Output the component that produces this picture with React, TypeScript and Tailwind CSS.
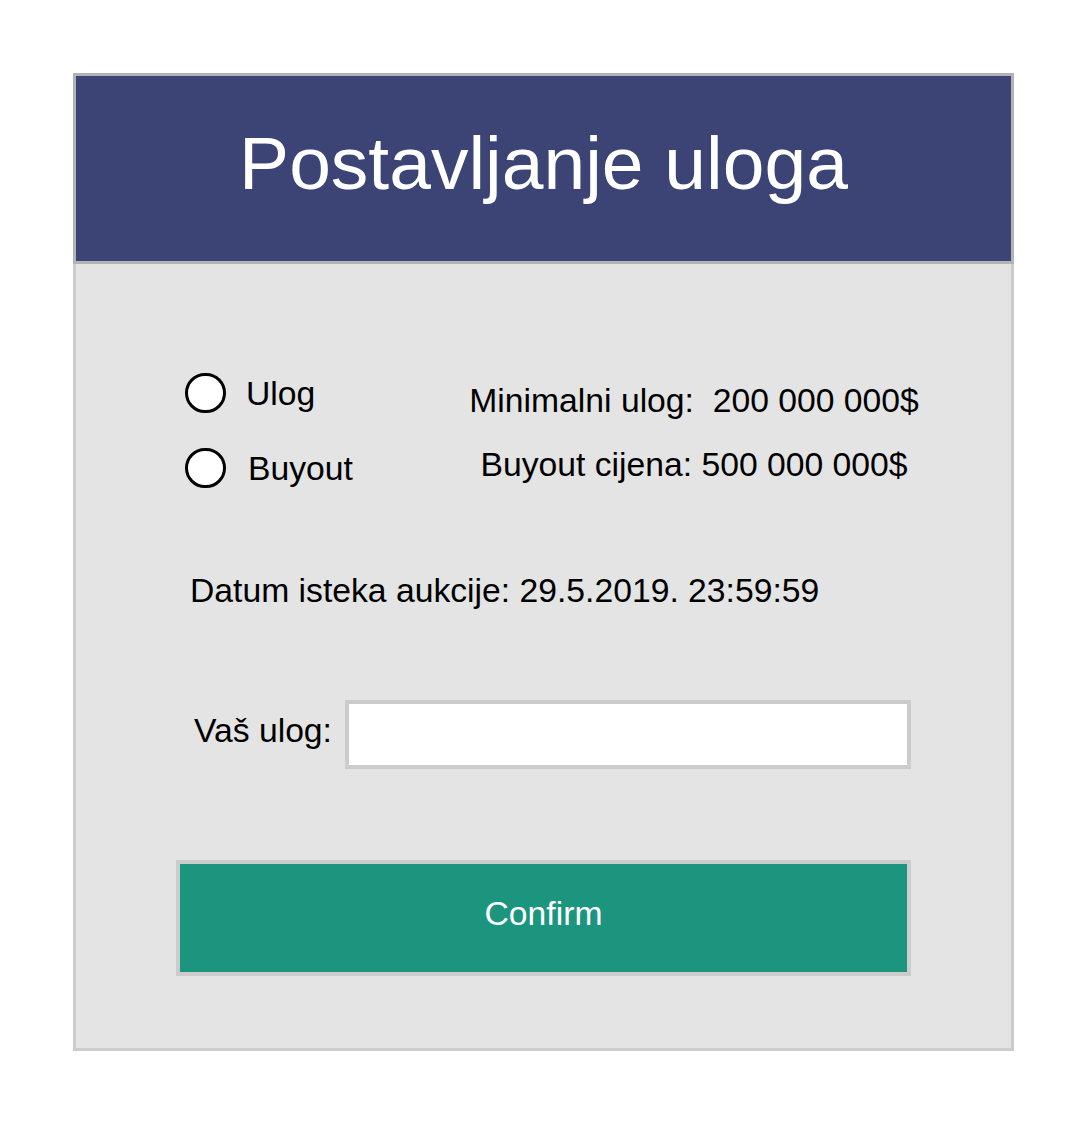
export default function App() {
  return (
    <div
      className="min-h-screen bg-white pt-[73px] pl-[73px]"
      style={{ fontFamily: '"Liberation Sans", Arial, sans-serif' }}
    >
      <div className="w-[941px]">
        <div className="h-[191px] border-[3px] border-[#b3b3b3] bg-[#3c4475] flex items-center justify-center pb-[10px]">
          <h1 className="text-[75px] leading-none text-white">Postavljanje uloga</h1>
        </div>

        <div className="border-x-[3px] border-b-[3px] border-[#cccccc] bg-[#e4e4e4] px-[100px] pt-[109px] pb-[72px] text-black text-[33.7px]">
          {/* radio options + prices */}
          <div className="flex items-start">
            <div className="w-[280px] shrink-0 flex flex-col gap-[35px]">
              <label className="h-[40px] flex items-center">
                <span className="ml-[9px] w-[41px] h-[40px] rounded-full border-[3.5px] border-black bg-white" />
                <span className="ml-[20px] mt-[2px] leading-none">Ulog</span>
              </label>
              <label className="h-[40px] flex items-center">
                <span className="ml-[9px] w-[41px] h-[40px] rounded-full border-[3.5px] border-black bg-white" />
                <span className="ml-[22px] mt-[2px] leading-none">Buyout</span>
              </label>
            </div>
            <div className="w-[476px] shrink-0 mt-[11px] flex flex-col items-center gap-[30px] leading-none whitespace-pre">
              <div className="h-[34px]">Minimalni ulog:  200 000 000$</div>
              <div className="h-[34px]">Buyout cijena: 500 000 000$</div>
            </div>
          </div>

          <div className="mt-[86px] ml-[14px] h-[34px] leading-none">
            Datum isteka aukcije: 29.5.2019. 23:59:59
          </div>

          <div className="mt-[92px] flex items-start">
            <span className="w-[151px] shrink-0 ml-[18px] mt-[14px] leading-none">Vaš ulog:</span>
            <input
              type="text"
              className="flex-1 min-w-0 h-[69px] border-[4px] border-[#cccccc] bg-white outline-none px-2 text-[28px]"
            />
          </div>

          <button className="mt-[91px] w-full h-[116px] border-[4px] border-[#cccccc] bg-[#1b957d] text-white leading-none flex items-center justify-center pb-[8px]">
            Confirm
          </button>
        </div>
      </div>
    </div>
  )
}
